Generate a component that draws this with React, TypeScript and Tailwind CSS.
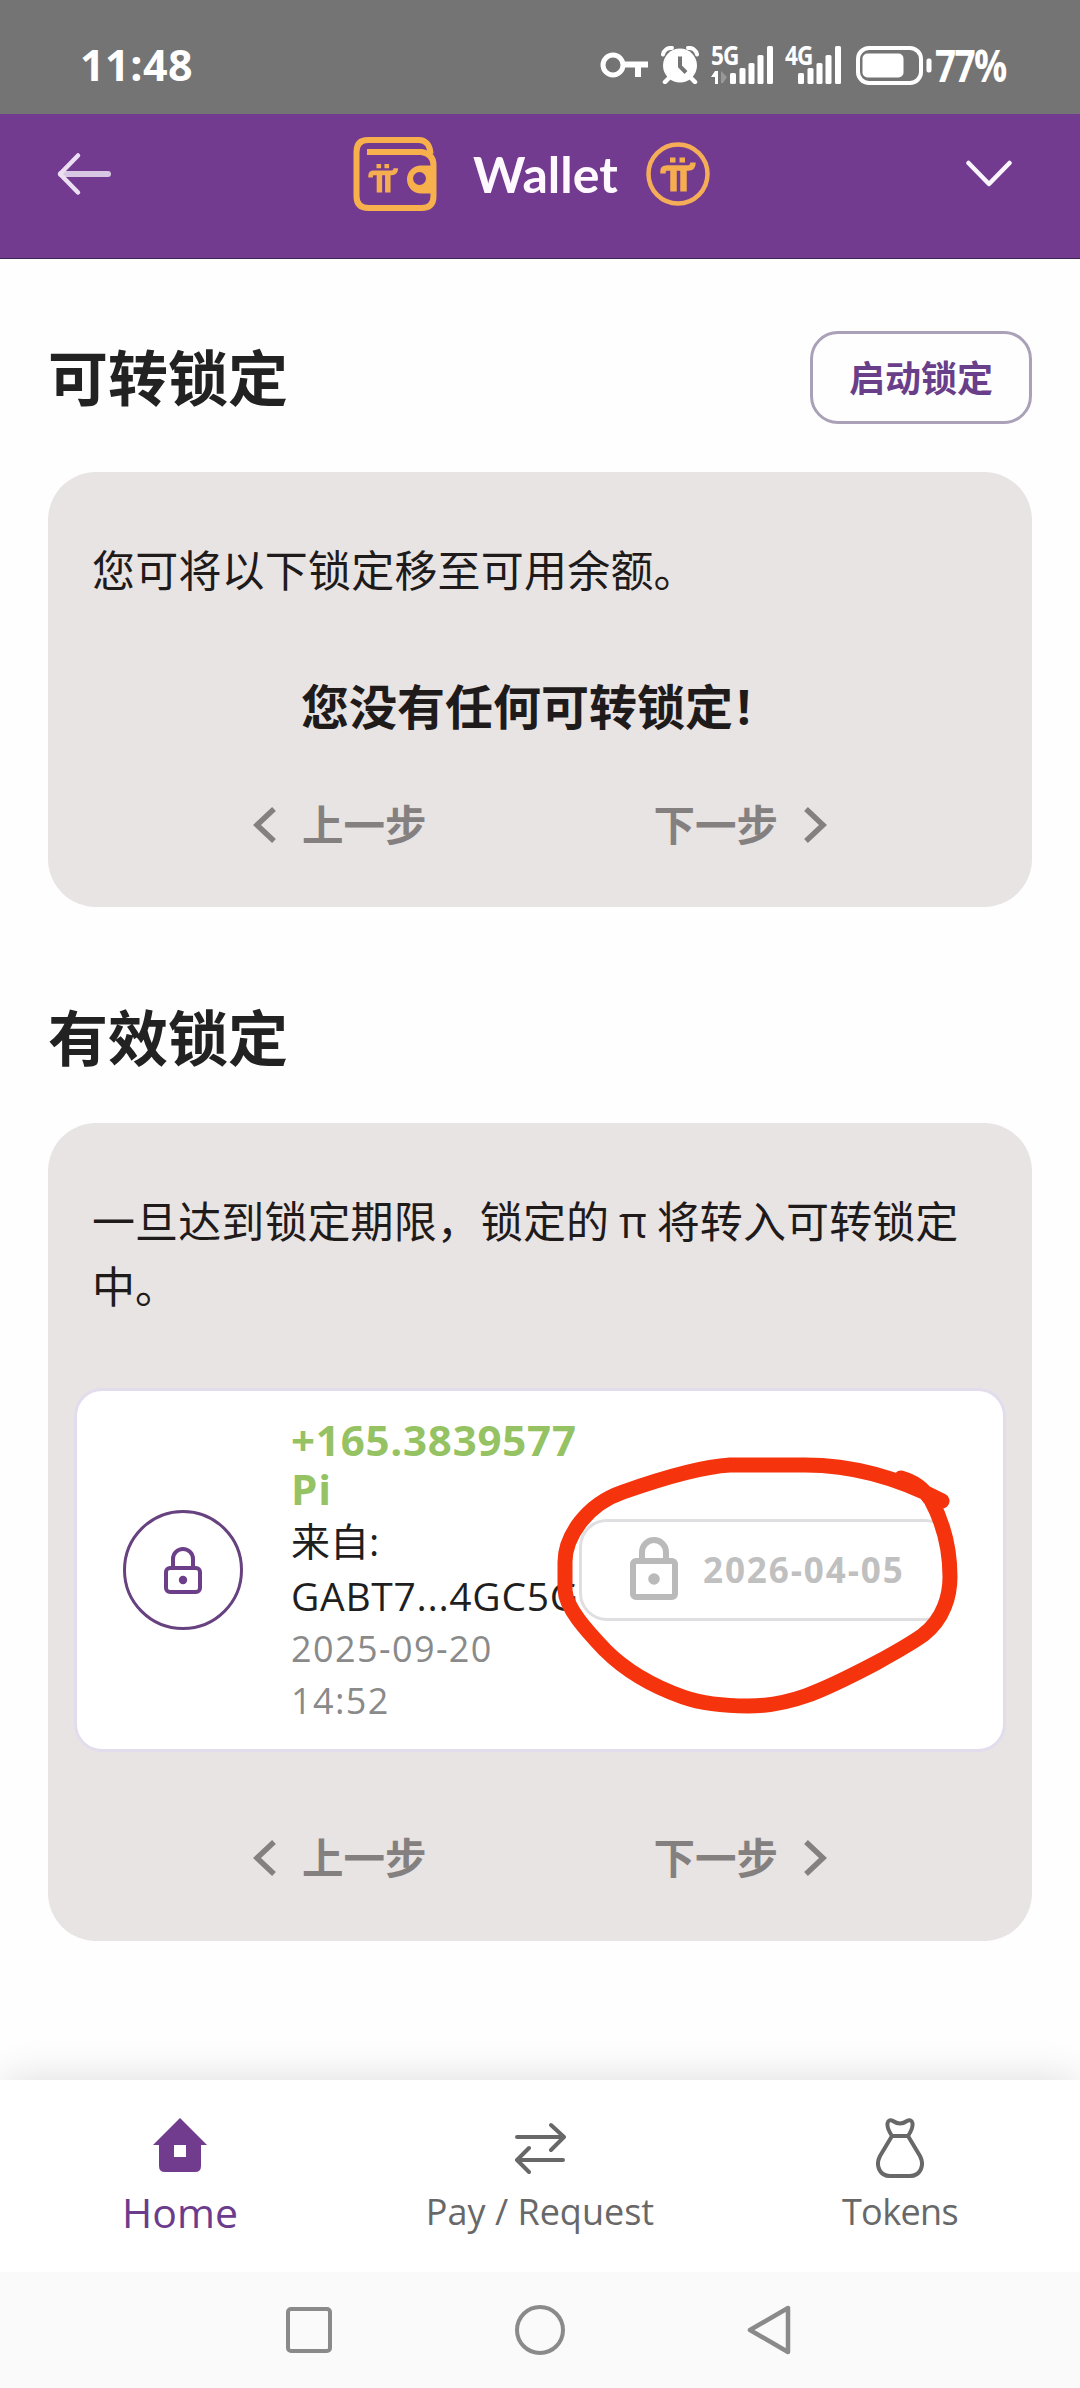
import type { ReactNode } from "react"

type PagerProps = { className?: string }
type LockCardProps = { amount: string; from: string; date: string; time: string; unlockDate: string }
type NavItemProps = { icon: ReactNode; label: string; active?: boolean; labelClass: string }

function SignalBars({ className }: { className: string }) {
    return (
        <svg className={className} viewBox="0 0 44 38" fill="#fff">
            <rect x="0" y="27" width="6" height="11" rx="1.5" />
            <rect x="9.5" y="22" width="6" height="16" rx="1.5" />
            <rect x="18.5" y="17" width="6" height="21" rx="1.5" />
            <rect x="27.5" y="9" width="6" height="29" rx="1.5" />
            <rect x="37" y="0" width="6" height="38" rx="1.5" />
        </svg>
    )
}

function StatusBar() {
    return (
        <div className="h-[114px] bg-[#747474] flex items-center pt-4 pl-[80px] pr-[71px] text-white">
            <p className="font-['Open_Sans'] font-bold text-[43px] leading-[44px] tracking-[0.5px] w-[116px]">11:48</p>
            <div className="flex items-center ml-auto">
                <svg className="w-12 h-[26px]" viewBox="0 0 48 26" fill="none" stroke="#fff">
                    <circle cx="13" cy="13" r="10" strokeWidth="5" />
                    <path d="M23 12.5h25M38 12v13" strokeWidth="6" />
                </svg>
                <svg className="w-[38px] h-[38px] ml-[13px]" viewBox="0 0 38 38" fill="none" stroke="#fff">
                    <circle cx="19" cy="19.5" r="17" fill="#fff" stroke="none" />
                    <path d="M2 8.5a8 8 0 0 1 9-6.5M36 8.5a8 8 0 0 0-9-6.5" strokeWidth="4" strokeLinecap="round" />
                    <path d="M8 32l-4 4M30 32l4 4" strokeWidth="4.5" strokeLinecap="round" />
                    <path d="M19 10.5v10l6 6" stroke="#747474" strokeWidth="4" />
                </svg>
                <div className="relative w-[63px] h-[38px] ml-[12px]">
                    <span className="absolute left-0 -top-px font-['Open_Sans'] font-bold text-[26px] leading-[20px] tracking-[-1px] scale-x-[0.87] origin-left">5G</span>
                    <svg className="absolute left-0 bottom-0 w-4 h-[14px]" viewBox="0 0 16 14">
                        <path d="M0 7l4-6h3v13H4V7z" fill="#fff" />
                        <path d="M10 1l6 6-4 6h-2z" fill="#989898" />
                    </svg>
                    <SignalBars className="absolute right-0 top-0 w-[44px] h-[38px]" />
                </div>
                <div className="relative w-[57px] h-[38px] ml-[11px]">
                    <span className="absolute left-0 -top-px font-['Open_Sans'] font-bold text-[26px] leading-[20px] tracking-[-1px] scale-x-[0.87] origin-left">4G</span>
                    <SignalBars className="absolute right-0 top-0 w-[44px] h-[38px]" />
                </div>
                <svg className="w-[76px] h-[39px] ml-[14px]" viewBox="0 0 76 39" fill="none">
                    <rect x="2" y="2" width="63" height="35" rx="11" stroke="#fff" strokeWidth="4" />
                    <rect x="6.5" y="7.5" width="41" height="24" rx="5" fill="#fff" />
                    <rect x="70.5" y="12.5" width="5" height="14" rx="2" fill="#fff" />
                </svg>
                <p className="font-['Open_Sans'] font-bold text-[44px] leading-[44px] tracking-[-2px] w-[74px] ml-[3px] scale-x-[0.84] origin-left whitespace-nowrap">77%</p>
            </div>
        </div>
    )
}

// the pi mark, shared by the wallet and coin logos
function PiMark() {
    return (
        <g fill="none" stroke="#f6ad4f">
            <path d="M9.5 2.5h5.500M19 2.500h5.500" strokeWidth="5" />
            <path d="M2.500 16v-2q0-3.500 4-3.500h21q5 0 5-5.500" strokeWidth="5.5" />
            <path d="M13 10v24M23 10v24" strokeWidth="6.5" />
        </g>
    )
}

function Header() {
    return (
        <div className="h-[145px] bg-[#723b90] border-b border-[#3b2450] flex items-start pl-[56px] pr-[68px] pt-[22px]">
            <svg className="w-[56px] h-[44px] mt-4" viewBox="0 0 56 44" fill="none" strokeLinecap="round" strokeLinejoin="round">
                <path d="M5 22h47" stroke="#d9c8e4" strokeWidth="6" />
                <path d="M22 3.5L4 22l18 18.5" stroke="#ecdff2" strokeWidth="4.5" />
            </svg>
            <div className="flex items-center h-[76px] ml-[241px]">
                <svg className="w-[84px] h-[76px]" viewBox="0 0 84 76" fill="none" stroke="#f8b04c">
                    <path d="M77.500 18C77 8 72 4 66 4H15Q3.500 4 3.500 16v44q0 12 12 12h53q12 0 12-12V29q0-11-12-13H14" strokeWidth="6" />
                    <path d="M80 32.500H68a11 11 0 0 0 0 22h12z" fill="#f8b04c" strokeWidth="6" />
                    <circle cx="66.5" cy="42.5" r="6.5" fill="#723b90" stroke="none" />
                    <g transform="translate(15.500 28) scale(.84)">
                        <PiMark />
                    </g>
                </svg>
                <h1 className="ml-[36px] w-[144px] font-['Lato'] font-bold text-[50px] leading-[60px] text-[#fff8ff]">Wallet</h1>
                <svg className="w-[64px] h-[64px] ml-[29px]" viewBox="0 0 64 64" fill="none">
                    <circle cx="32" cy="32" r="29.5" stroke="#f6ad58" strokeWidth="4.5" />
                    <g transform="translate(14.500 15.500)">
                        <PiMark />
                    </g>
                </svg>
            </div>
            <svg className="w-[46px] h-[28px] mt-[24px] ml-auto" viewBox="0 0 46 28" fill="none">
                <path d="M2.500 3l20.500 21L43.500 3" stroke="#fbf5fd" strokeWidth="4.5" strokeLinecap="round" strokeLinejoin="round" />
            </svg>
        </div>
    )
}

function Pager({ className = "" }: PagerProps) {
    return (
        <div className={`flex items-center justify-between pl-[205px] pr-[205px] text-[#858080] font-bold text-[41.5px] leading-[48px] ${className}`}>
            <button className="flex items-center gap-[25px]">
                <svg className="w-[24px] h-[38px]" viewBox="0 0 24 38" fill="none" stroke="currentColor" strokeWidth="5.5">
                    <path d="M21 3L4 19l17 16" />
                </svg>
                <span className="-mt-1">上一步</span>
            </button>
            <button className="flex items-center gap-[25px]">
                <span className="-mt-1">下一步</span>
                <svg className="w-[24px] h-[38px]" viewBox="0 0 24 38" fill="none" stroke="currentColor" strokeWidth="5.5">
                    <path d="M3 3l17 16L3 35" />
                </svg>
            </button>
        </div>
    )
}

function LockCard({ amount, from, date, time, unlockDate }: LockCardProps) {
    return (
        <div className="relative mx-[26px] h-[364px] bg-white border-3 border-[#e2dcec] rounded-[28px] flex items-center pl-[46px]">
            <div className="w-[120px] h-[120px] shrink-0 rounded-full border-3 border-[#67427f] flex items-center justify-center">
                <svg className="w-[38px] h-[48px]" viewBox="0 0 38 48" fill="none" stroke="#6c3f88" strokeWidth="4">
                    <path d="M9 22V13a10 10 0 0 1 20 0v9" />
                    <rect x="2" y="22" width="34" height="24" rx="4" />
                    <circle cx="19" cy="34" r="4.2" fill="#6c3f88" stroke="none" />
                </svg>
            </div>
            <div className="ml-[48px] w-[288px] pt-px shrink-0 whitespace-nowrap font-['Open_Sans','Noto_Sans_CJK_SC',sans-serif]">
                <p className="text-[#95c263] font-bold text-[42px] leading-[49px] tracking-[0.8px]">{amount}<br />Pi</p>
                <p className="text-[#1f1f1f] text-[39px] leading-[55px]">来自:<br /><span className="tracking-[0.7px]">{from}</span></p>
                <p className="text-[#8a8a8a] text-[36px] leading-[52px] tracking-[1.4px]">{date}<br />{time}</p>
            </div>
            <div className="w-[374px] h-[102px] shrink-0 bg-white border-3 border-[#dfdfe2] rounded-[28px] flex items-center pl-[48px]">
                <svg className="w-[48px] h-[64px] -mt-1" viewBox="0 0 48 64" fill="none" stroke="#bababa" strokeWidth="6">
                    <path d="M12 24V16a12 12 0 0 1 24 0v8" />
                    <rect x="3" y="25" width="42" height="36" rx="3" />
                    <circle cx="24" cy="43" r="5.8" fill="#bababa" stroke="none" />
                </svg>
                <span className="ml-[25px] font-['Open_Sans'] font-bold text-[35px] leading-[40px] tracking-[1.9px] text-[#c0c0c0] whitespace-nowrap">{unlockDate}</span>
            </div>
            {/* hand-drawn marker around the unlock date */}
            <svg className="absolute left-[472px] top-[59px] w-[410px] h-[270px]" viewBox="550 1450 410 270" fill="none">
                <path
                    d="M943 1501Q875 1465 806 1465H731Q695 1467 624 1492C586 1505 566 1538 566 1562V1590C567 1608 587 1630 606 1650Q636 1680 684 1697Q710 1706 749 1706C790 1706 820 1693 877 1663Q910 1645 924 1635C945 1619 951 1595 951 1577C951 1550 946 1526 932 1500Q921 1483 902 1478"
                    stroke="#f5330d"
                    strokeWidth="15"
                    strokeLinecap="round"
                />
            </svg>
        </div>
    )
}

function NavItem({ icon, label, active, labelClass }: NavItemProps) {
    return (
        <div className={`flex flex-col items-center pt-[36px] ${active ? "text-[#6c3c8c]" : "text-[#686868]"}`}>
            <div className="h-[64px] flex items-center">{icon}</div>
            <p className={`font-['Open_Sans'] h-[56px] leading-[56px] mt-[4px] whitespace-nowrap ${labelClass}`}>{label}</p>
        </div>
    )
}

function BottomNav() {
    return (
        <div className="relative h-[192px] bg-white grid grid-cols-3 shadow-[0_-4px_40px_-4px_rgba(0,0,0,0.14)]">
            <NavItem
                active
                label="Home"
                labelClass="text-[41px]"
                icon={
                    <svg className="w-[54px] h-[54px] -mt-1.5" viewBox="0 0 54 54">
                        <path d="M27 0l27 27h-6v21q0 6-6 6H12q-6 0-6-6V27H0z" fill="#713b8e" />
                        <rect x="21" y="27" width="12" height="12" fill="#fff" />
                    </svg>
                }
            />
            <NavItem
                label="Pay / Request"
                labelClass="text-[36px]"
                icon={
                    <svg className="w-[52px] h-[52px]" viewBox="0 0 52 52" fill="none" stroke="currentColor" strokeWidth="4" strokeLinecap="round" strokeLinejoin="round">
                        <path d="M3 15h47M37 3l13 12-13 13M49 38H3M15 26L3 38l12 12" />
                    </svg>
                }
            />
            <NavItem
                label="Tokens"
                labelClass="text-[36px] tracking-[-0.6px]"
                icon={
                    <svg className="w-[48px] h-[60px]" viewBox="0 0 48 60" fill="none" stroke="currentColor" strokeWidth="4" strokeLinejoin="round">
                        <path d="M16 18L4 38c-5 10 0 20 10 20h20c10 0 15-10 10-20L32 18z" />
                        <path d="M16 18C8 6 12 0 17 3q7 5 14 0c5-3 9 3 1 15" />
                    </svg>
                }
            />
        </div>
    )
}

function SystemNav() {
    return (
        <div className="relative h-[116px] bg-[#fafafa] flex items-center justify-between pl-[286px] pr-[289px]">
            <div className="w-[46px] h-[46px] border-4 border-[#8a8a8a] rounded-[5px]" />
            <div className="w-[50px] h-[50px] border-4 border-[#8a8a8a] rounded-full" />
            <svg className="w-[44px] h-[50px]" viewBox="0 0 44 50" fill="none">
                <path d="M41 3v44L3 25z" stroke="#8a8a8a" strokeWidth="4.5" strokeLinejoin="round" />
            </svg>
        </div>
    )
}

export default function App() {
    return (
        <div className="w-[1080px] h-[2388px] overflow-hidden bg-[#fefefe] flex flex-col font-['Noto_Sans_CJK_SC',sans-serif]">
            <StatusBar />
            <Header />
            <main className="px-12 flex-1">
                <div className="flex justify-between items-center mt-[72px]">
                    <h2 className="-mt-1.5 font-bold text-[60px] leading-[72px] text-[#222]">可转锁定</h2>
                    <button className="w-[222px] h-[93px] border-3 border-[#aaa0b8] rounded-[28px] pb-1 text-[#6a3f8a] font-bold text-[36px]">启动锁定</button>
                </div>
                <section className="mt-[48px] h-[435px] bg-[#e8e4e4] rounded-[48px] pt-[64px]">
                    <p className="px-[44px] text-[43px] leading-[65px] tracking-[0.2px] text-[#1f1b1b]">您可将以下锁定移至可用余额。</p>
                    <p className="mt-[68px] h-[70px] pl-[253px] font-bold text-[48px] leading-[70px] text-[#1f1b1b]">您没有任何可转锁定<span className="font-['Open_Sans'] leading-none ml-1">!</span></p>
                    <Pager className="mt-[64px]" />
                </section>
                <h2 className="mt-[92px] font-bold text-[60px] leading-[72px] text-[#222]">有效锁定</h2>
                <section className="mt-[52px] h-[818px] bg-[#e8e4e4] rounded-[48px] pt-[64px]">
                    <p className="px-[44px] h-[130px] text-[43px] leading-[65px] tracking-[0.1px] text-[#1f1b1b]">一旦达到锁定期限，锁定的 <span className="font-['Open_Sans'] leading-none">π</span> 将转入可转锁定中。</p>
                    <div className="mt-[71px]">
                        <LockCard amount="+165.3839577" from="GABT7...4GC5G" date="2025-09-20" time="14:52" unlockDate="2026-04-05" />
                    </div>
                    <Pager className="mt-[84px]" />
                </section>
            </main>
            <BottomNav />
            <SystemNav />
        </div>
    )
}
